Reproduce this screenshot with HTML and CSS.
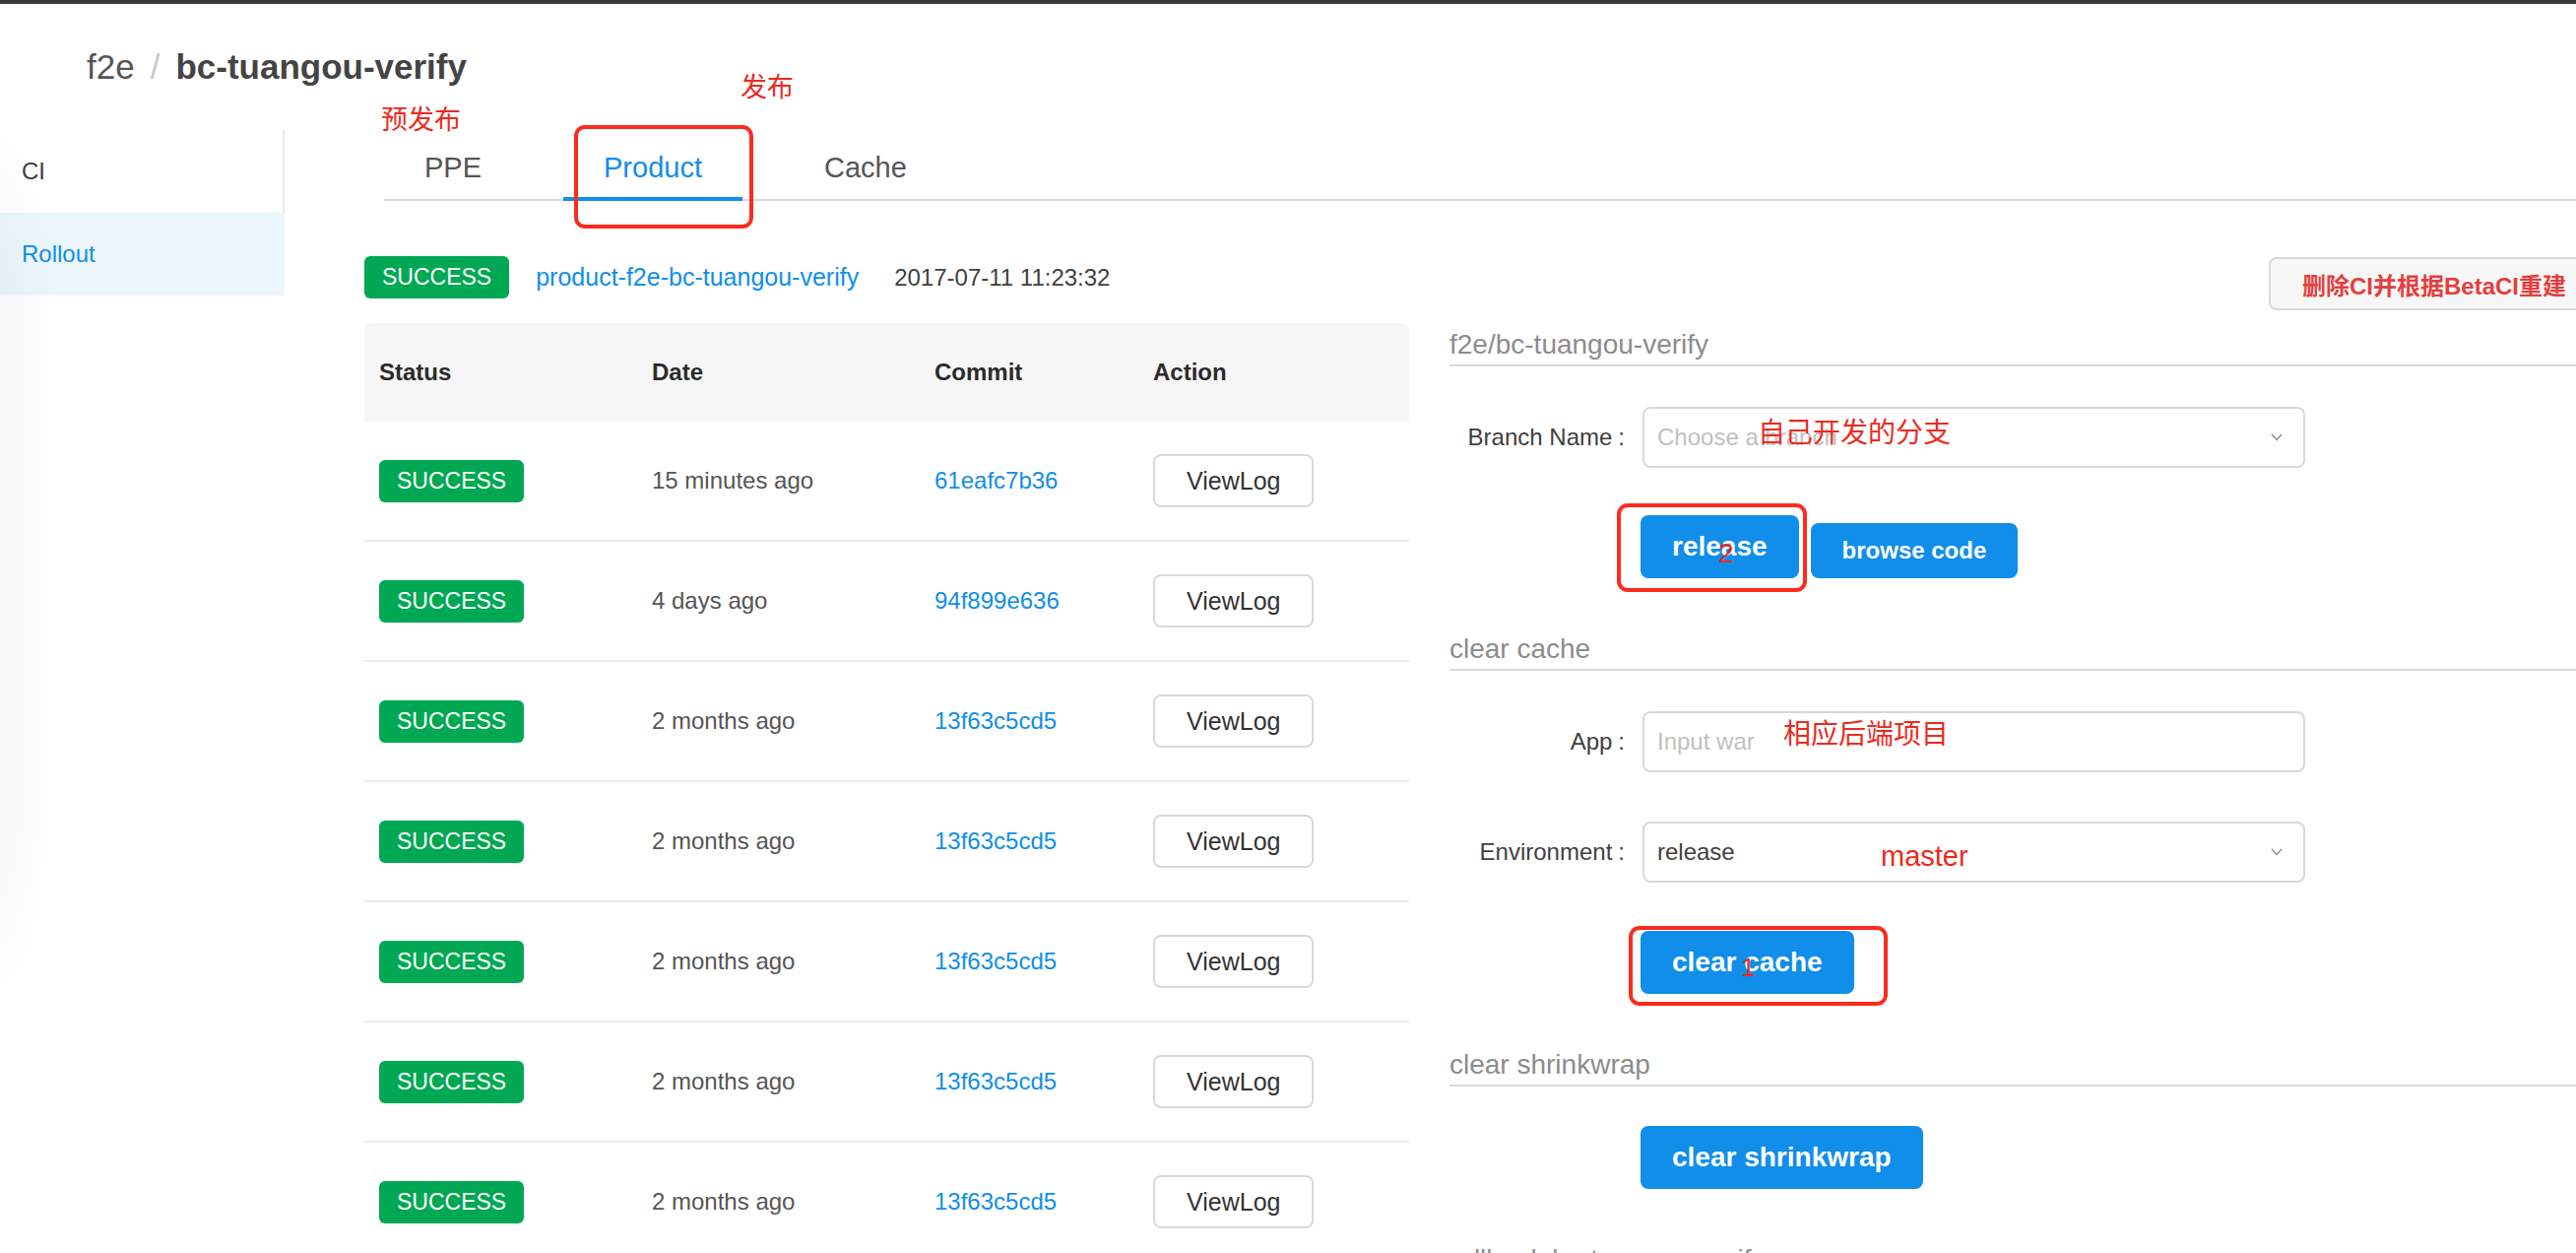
FILE: index.html
```html
<!DOCTYPE html>
<html lang="zh-CN">
<head>
<meta charset="utf-8">
<title>f2e / bc-tuangou-verify</title>
<link rel="stylesheet" href="styles.css">
</head>
<body>
<div class="topbar"></div>
<div class="shade"></div>
<header class="crumb">
  <span class="crumb-parent">f2e</span><span class="crumb-sep">/</span><span class="crumb-current">bc-tuangou-verify</span>
</header>
<div class="layout">
  <aside class="sider">
    <div class="menu-item">CI</div>
    <div class="menu-item active">Rollout</div>
  </aside>
  <main class="content">
    <nav class="tabs">
      <span class="note note-ppe">预发布</span>
      <span class="note note-product">发布</span>
      <div class="tab">PPE</div>
      <div class="tab active">Product<span class="mark mark-tab"></span></div>
      <div class="tab">Cache</div>
    </nav>
    <div class="panes">
      <section class="history">
        <div class="latest">
          <span class="badge">SUCCESS</span>
          <a class="link latest-link">product-f2e-bc-tuangou-verify</a>
          <span class="latest-date">2017-07-11 11:23:32</span>
        </div>
        <div class="table">
          <div class="row thead">
            <div class="cell">Status</div>
            <div class="cell">Date</div>
            <div class="cell">Commit</div>
            <div class="cell">Action</div>
          </div>
          <div class="row">
            <div class="cell"><span class="badge">SUCCESS</span></div>
            <div class="cell">15 minutes ago</div>
            <div class="cell"><a class="link">61eafc7b36</a></div>
            <div class="cell"><button class="btn-ghost">ViewLog</button></div>
          </div>
          <div class="row">
            <div class="cell"><span class="badge">SUCCESS</span></div>
            <div class="cell">4 days ago</div>
            <div class="cell"><a class="link">94f899e636</a></div>
            <div class="cell"><button class="btn-ghost">ViewLog</button></div>
          </div>
          <div class="row">
            <div class="cell"><span class="badge">SUCCESS</span></div>
            <div class="cell">2 months ago</div>
            <div class="cell"><a class="link">13f63c5cd5</a></div>
            <div class="cell"><button class="btn-ghost">ViewLog</button></div>
          </div>
          <div class="row">
            <div class="cell"><span class="badge">SUCCESS</span></div>
            <div class="cell">2 months ago</div>
            <div class="cell"><a class="link">13f63c5cd5</a></div>
            <div class="cell"><button class="btn-ghost">ViewLog</button></div>
          </div>
          <div class="row">
            <div class="cell"><span class="badge">SUCCESS</span></div>
            <div class="cell">2 months ago</div>
            <div class="cell"><a class="link">13f63c5cd5</a></div>
            <div class="cell"><button class="btn-ghost">ViewLog</button></div>
          </div>
          <div class="row">
            <div class="cell"><span class="badge">SUCCESS</span></div>
            <div class="cell">2 months ago</div>
            <div class="cell"><a class="link">13f63c5cd5</a></div>
            <div class="cell"><button class="btn-ghost">ViewLog</button></div>
          </div>
          <div class="row">
            <div class="cell"><span class="badge">SUCCESS</span></div>
            <div class="cell">2 months ago</div>
            <div class="cell"><a class="link">13f63c5cd5</a></div>
            <div class="cell"><button class="btn-ghost">ViewLog</button></div>
          </div>
        </div>
      </section>

      <section class="ops">
        <div class="ops-top">
          <button class="btn-rebuild">删除CI并根据BetaCI重建</button>
        </div>

        <h3 class="ops-title first">f2e/bc-tuangou-verify</h3>
        <div class="form-row">
          <label class="form-label">Branch Name<span class="colon">:</span></label>
          <div class="control">
            <span class="placeholder">Choose a branch</span>
            <svg class="chev" width="12" height="8" viewBox="0 0 12 8"><polyline points="1,1 6,6.5 11,1" fill="none" stroke="#8c8c8c" stroke-width="1.4"/></svg>
            <span class="note note-branch">自己开发的分支</span>
          </div>
        </div>
        <div class="btn-row gap-release">
          <button class="btn btn-lg">release<span class="note note-num num-2">2</span><span class="mark mark-release"></span></button>
          <button class="btn btn-md">browse code</button>
        </div>

        <h3 class="ops-title">clear cache</h3>
        <div class="form-row">
          <label class="form-label">App<span class="colon">:</span></label>
          <div class="control">
            <span class="placeholder">Input war</span>
            <span class="note note-app">相应后端项目</span>
          </div>
        </div>
        <div class="form-row env-row">
          <label class="form-label">Environment<span class="colon">:</span></label>
          <div class="control">
            <span class="value">release</span>
            <svg class="chev" width="12" height="8" viewBox="0 0 12 8"><polyline points="1,1 6,6.5 11,1" fill="none" stroke="#8c8c8c" stroke-width="1.4"/></svg>
            <span class="note note-master">master</span>
          </div>
        </div>
        <div class="btn-row gap-cache">
          <button class="btn btn-lg">clear cache<span class="note note-num num-1">1</span><span class="mark mark-cache"></span></button>
        </div>

        <h3 class="ops-title">clear shrinkwrap</h3>
        <div class="btn-row gap-shrink">
          <button class="btn btn-lg">clear shrinkwrap</button>
        </div>

        <h3 class="ops-title">rollback bc-tuangou-verify</h3>
      </section>
    </div>
  </main>
</div>
</body>
</html>
```

FILE: styles.css
```css
html, body {
  margin: 0;
  padding: 0;
}
body {
  width: 2616px;
  height: 1272px;
  overflow: hidden;
  position: relative;
  background: #fff;
  color: #555;
  font-family: "Liberation Sans", "Noto Sans CJK SC", sans-serif;
  font-size: 24px;
}
button {
  font-family: inherit;
  cursor: pointer;
}

.topbar {
  height: 4px;
  background: #3b3b3b;
}

.shade {
  position: absolute;
  left: 0;
  top: 100px;
  width: 60px;
  height: 950px;
  background: linear-gradient(to right, rgba(0, 0, 0, 0.028), rgba(0, 0, 0, 0));
  -webkit-mask-image: linear-gradient(to bottom, transparent, #000 20%, #000 75%, transparent);
  mask-image: linear-gradient(to bottom, transparent, #000 20%, #000 75%, transparent);
  pointer-events: none;
}

/* breadcrumb */
.crumb {
  padding: 44px 0 44px 88px;
  height: 40px;
  line-height: 40px;
  font-size: 35px;
  white-space: nowrap;
}
.crumb-parent {
  color: #555;
}
.crumb-sep {
  color: #c8c8c8;
  margin: 0 16px;
}
.crumb-current {
  color: #444;
  font-weight: bold;
}

/* layout */
.layout {
  display: flex;
  align-items: flex-start;
}
.sider {
  flex: 0 0 289px;
  width: 289px;
}
.menu-item {
  height: 84px;
  line-height: 84px;
  padding-left: 22px;
  font-size: 24px;
  color: #404040;
  border-right: 2px solid #e9e9e9;
}
.menu-item.active {
  background: #ecf6fd;
  color: #108ee9;
  border-right-color: #ecf6fd;
}

.content {
  flex: 1 1 auto;
  min-width: 0;
  padding-left: 81px;
}

/* tabs */
.tabs {
  position: relative;
  display: flex;
  gap: 42px;
  margin-left: 20px;
  height: 70px;
  border-bottom: 2px solid #d9d9d9;
}
.tab {
  position: relative;
  box-sizing: border-box;
  height: 72px;
  margin-bottom: -2px;
  padding: 8px 41px 0;
  border-bottom: 4px solid transparent;
  display: flex;
  align-items: center;
  font-size: 29px;
  color: #555;
}
.tab.active {
  color: #108ee9;
  border-bottom-color: #108ee9;
}

/* annotations */
.note {
  position: absolute;
  font-family: "Noto Sans CJK SC", sans-serif;
  font-weight: 400;
  color: #ec2a20;
  font-size: 28px;
  line-height: 28px;
  white-space: nowrap;
  pointer-events: none;
}
.note-ppe {
  left: -3px;
  top: -26px;
  font-size: 27px;
  line-height: 27px;
}
.note-product {
  left: 362px;
  top: -59px;
  font-size: 27px;
  line-height: 27px;
}
.note-branch {
  left: 115px;
  top: 8px;
}
.note-app {
  left: 141px;
  top: 5px;
}
.note-master {
  left: 240px;
  top: 19px;
  font-family: "Liberation Sans", sans-serif;
  font-size: 29px;
}
.note-num {
  font-family: "Liberation Sans", sans-serif;
  font-weight: 400;
  font-size: 28px;
}
.num-2 {
  left: 79px;
  top: 25px;
}
.num-1 {
  left: 102px;
  top: 23px;
  font-size: 26px;
}
.mark {
  position: absolute;
  box-sizing: border-box;
  border: 4px solid #fb2c1e;
  border-radius: 11px;
  pointer-events: none;
}
.mark-tab {
  left: 11px;
  top: -5px;
  width: 182px;
  height: 105px;
}
.mark-release {
  left: -24px;
  top: -12px;
  width: 193px;
  height: 90px;
}
.mark-cache {
  left: -12px;
  top: -5px;
  width: 263px;
  height: 81px;
}

/* panes */
.panes {
  display: flex;
  gap: 41px;
}
.history {
  flex: 0 0 1061px;
  width: 1061px;
}
.ops {
  flex: 0 0 1168px;
  width: 1168px;
}

/* latest status line */
.latest {
  display: flex;
  align-items: center;
  height: 43px;
  margin-top: 56px;
  white-space: nowrap;
}
.badge {
  display: inline-flex;
  align-items: center;
  height: 43px;
  padding: 0 18px;
  border-radius: 6px;
  background: #00a854;
  color: #fff;
  font-size: 23px;
}
.link {
  color: #108ee9;
  text-decoration: none;
}
.latest-link {
  margin-left: 27px;
  font-size: 25px;
}
.latest-date {
  margin-left: 36px;
  color: #404040;
}

/* table */
.table {
  margin-top: 25px;
}
.row {
  display: grid;
  grid-template-columns: 277px 287px 222px 1fr;
  align-items: center;
  height: 120px;
  border-bottom: 2px solid #ebebeb;
  color: #555;
}
.row.thead {
  height: 100px;
  border-bottom: none;
  background: #f6f6f6;
  border-radius: 8px 8px 0 0;
  color: #2b2b2b;
  font-weight: bold;
}
.cell {
  padding-left: 15px;
  white-space: nowrap;
}
.btn-ghost {
  height: 54px;
  padding: 0 32px;
  border: 2px solid #d9d9d9;
  border-radius: 8px;
  background: #fff;
  color: #333;
  font-size: 25px;
}

/* operations */
.ops-top {
  display: flex;
  justify-content: flex-end;
  margin-top: 57px;
}
.btn-rebuild {
  height: 54px;
  padding: 0 32px;
  border: 2px solid #d9d9d9;
  border-radius: 8px;
  background: #f7f7f7;
  color: #e53e3e;
  font-size: 24px;
  font-weight: bold;
  white-space: nowrap;
}
.ops-title {
  margin: 52px 0 0;
  height: 40px;
  line-height: 40px;
  font-size: 28px;
  font-weight: normal;
  color: #8c8c8c;
  border-bottom: 2px solid #d9d9d9;
  white-space: nowrap;
}
.ops-title.first {
  margin-top: 15px;
}
.form-row {
  display: flex;
  align-items: center;
  margin-top: 41px;
  height: 62px;
}
.form-row.env-row {
  margin-top: 50px;
}
.form-label {
  box-sizing: border-box;
  width: 196px;
  padding-right: 18px;
  text-align: right;
  color: #404040;
  font-size: 24px;
  white-space: nowrap;
}
.colon {
  margin-left: 6px;
}
.control {
  position: relative;
  box-sizing: border-box;
  width: 673px;
  height: 62px;
  border: 2px solid #d9d9d9;
  border-radius: 8px;
  padding: 0 21px 0 13px;
  display: flex;
  align-items: center;
  justify-content: space-between;
  font-size: 24px;
}
.placeholder {
  color: #bfbfbf;
}
.value {
  color: #404040;
}
.chev {
  display: block;
}

.btn-row {
  display: flex;
  align-items: flex-end;
  gap: 12px;
  padding-left: 194px;
}
.gap-release {
  margin-top: 48px;
}
.gap-cache {
  margin-top: 49px;
}
.gap-shrink {
  margin-top: 40px;
}
.btn {
  position: relative;
  border: none;
  border-radius: 8px;
  background: #108ee9;
  color: #fff;
  font-weight: bold;
  padding: 0 32px;
  white-space: nowrap;
}
.btn-lg {
  height: 64px;
  font-size: 28px;
}
.btn-md {
  height: 56px;
  font-size: 24px;
}
```
